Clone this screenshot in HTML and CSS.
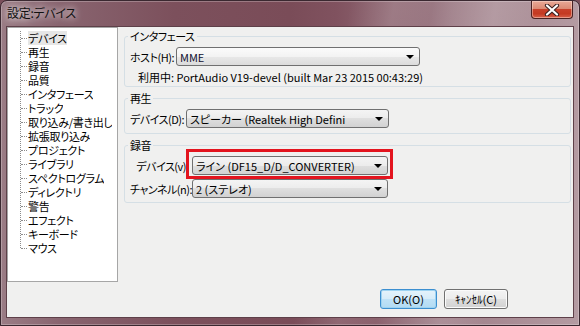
FILE: index.html
```html
<!DOCTYPE html>
<html lang="ja">
<head>
<meta charset="utf-8">
<title>設定:デバイス</title>
<link rel="stylesheet" href="styles.css">
</head>
<body>
<div class="window">
  <div class="titlebar">
    <span class="title">設定:デバイス</span>
    <div class="close">
      <svg width="16" height="12" viewBox="0 0 16 12">
        <path d="M3 1.5 L13 10.5 M13 1.5 L3 10.5" stroke="#3a2020" stroke-width="4.2" stroke-linecap="round"/>
        <path d="M3 1.5 L13 10.5 M13 1.5 L3 10.5" stroke="#ffffff" stroke-width="2.2" stroke-linecap="round"/>
      </svg>
    </div>
  </div>
  <div class="client">
    <div class="main">
      <div class="tree">
        <ul class="tree-list">
          <li class="sel"><span>デバイス</span></li>
          <li><span>再生</span></li>
          <li><span>録音</span></li>
          <li><span>品質</span></li>
          <li><span>インタフェース</span></li>
          <li><span>トラック</span></li>
          <li><span>取り込み/書き出し</span></li>
          <li><span>拡張取り込み</span></li>
          <li><span>プロジェクト</span></li>
          <li><span>ライブラリ</span></li>
          <li><span>スペクトログラム</span></li>
          <li><span>ディレクトリ</span></li>
          <li><span>警告</span></li>
          <li><span>エフェクト</span></li>
          <li><span>キーボード</span></li>
          <li><span>マウス</span></li>
        </ul>
      </div>
      <div class="panels">
        <div class="group g1">
          <div class="group-title">インタフェース</div>
          <div class="row r-host">
            <span class="lbl w-host">ホスト(H):</span>
            <div class="combo c-host"><span class="val">MME</span><span class="arrow"></span></div>
          </div>
          <div class="info">利用中: PortAudio V19-devel (built Mar 23 2015 00:43:29)</div>
        </div>
        <div class="group g2">
          <div class="group-title">再生</div>
          <div class="row r-play">
            <span class="lbl w-play">デバイス(D):</span>
            <div class="combo c-play"><span class="val">スピーカー (Realtek High Defini</span><span class="arrow"></span></div>
          </div>
        </div>
        <div class="group g3">
          <div class="group-title">録音</div>
          <div class="row r-rec1">
            <span class="lbl w-rec w-rec1">デバイス(v)</span>
            <div class="combo c-rec highlight"><span class="val">ライン (DF15_D/D_CONVERTER)</span><span class="arrow"></span></div>
          </div>
          <div class="row r-rec2">
            <span class="lbl w-rec">チャンネル(n):</span>
            <div class="combo c-rec"><span class="val">2 (ステレオ)</span><span class="arrow"></span></div>
          </div>
        </div>
      </div>
    </div>
    <div class="buttons">
      <div class="btn btn-ok">OK(O)</div>
      <div class="btn btn-cancel">ｷｬﾝｾﾙ(C)</div>
    </div>
  </div>
</div>
</body>
</html>
```

FILE: styles.css
```css
* { box-sizing: border-box; }
html, body { margin: 0; padding: 0; }
body {
  width: 580px;
  height: 326px;
  overflow: hidden;
  background: #7a4f5a;
  font-family: "Noto Sans CJK JP", "Noto Sans", sans-serif;
  font-size: 11px;
  line-height: 14px;
  color: #000;
  font-feature-settings: "palt";
}
.window {
  width: 580px;
  height: 326px;
  display: flex;
  flex-direction: column;
  border: 1px solid #3a2830;
  border-radius: 7px 7px 0 0;
  padding: 0 6px 8px 6px;
  background:
    linear-gradient(100deg, rgba(255,255,255,0) 0%, rgba(255,255,255,0) 55%, rgba(255,255,255,0.12) 62%, rgba(255,255,255,0) 68%, rgba(255,255,255,0.15) 78%, rgba(255,255,255,0) 85%),
    linear-gradient(90deg, #9a7c85 0%, #896570 10%, #7c505c 30%, #7a4c58 50%, #80525f 58%, #a0808a 78%, #b49ba2 100%);
  box-shadow: inset 0 0 0 1px rgba(255,255,255,0.25);
}
.titlebar {
  height: 26px;
  display: flex;
  align-items: flex-start;
  justify-content: space-between;
  flex: none;
}
.title {
  margin-top: 5px;
  font-size: 12px;
  line-height: 14px;
  color: #101010;
  letter-spacing: -0.3px;
  text-shadow: 0 0 6px rgba(255,255,255,0.9), 0 0 10px rgba(255,255,255,0.6);
}
.close {
  width: 42px;
  height: 18px;
  border: 1px solid #4a2222;
  border-top: none;
  border-radius: 0 0 4px 4px;
  background: linear-gradient(#e9a997 0%, #dc8a74 45%, #c8402a 50%, #c43a22 75%, #d8604a 100%);
  box-shadow: inset 0 0 0 1px rgba(255,230,220,0.45);
  display: flex;
  align-items: center;
  justify-content: center;
}
.close svg { display: block; }
.client {
  flex: 1;
  background: #f0f0ef;
  display: flex;
  flex-direction: column;
  outline: 1px solid #5e4049;
}
.main {
  height: 255px;
  display: flex;
  flex: none;
}
.tree {
  width: 111px;
  height: 255px;
  background: #fff;
  border: 1px solid #a6a6a6;
  padding: 3px 0 0 12px;
}
.tree-list {
  list-style: none;
  margin: 0;
  padding: 0;
  position: relative;
}
.tree-list::before {
  content: "";
  position: absolute;
  left: 0;
  top: 0;
  bottom: 7px;
  border-left: 1px dotted #8c8c8c;
}
.tree-list li {
  height: 14px;
  line-height: 14px;
  padding-left: 8px;
  position: relative;
  white-space: nowrap;
  letter-spacing: -0.3px;
}
.tree-list li span {
  display: inline-block;
  height: 14px;
  line-height: 14px;
  vertical-align: top;
  overflow: hidden;
}
.tree-list li::before {
  content: "";
  position: absolute;
  left: 1px;
  top: 7px;
  width: 6px;
  border-top: 1px dotted #8c8c8c;
}
.tree-list li.sel span {
  background: #e6e6e6;
}
.panels {
  width: 447px;
  margin-left: 6px;
  padding-top: 9px;
}
.group {
  border: 1px solid #d5dfe5;
  border-radius: 3px;
  padding: 0 5px 2px 5px;
}
.g2 { margin-top: 11px; padding-bottom: 5px; }
.g3 { margin-top: 11px; padding-bottom: 4px; }
.group-title {
  margin: -8px 0 0 -2px;
  width: fit-content;
  padding: 0 2px;
  height: 14px;
  line-height: 14px;
  background: #f0f0ef;
  letter-spacing: -0.4px;
}
.row {
  display: flex;
  align-items: center;
  margin-top: 4px;
}
.lbl {
  white-space: nowrap;
  flex: none;
  letter-spacing: -0.5px;
}
.w-host { width: 46px; }
.w-play { width: 56px; }
.w-rec { width: 62px; text-align: right; padding-right: 1px; }
.w-rec1 { padding-right: 6px; }
.combo {
  height: 19px;
  border: 1px solid #707070;
  border-radius: 3px;
  background: linear-gradient(#f4f4f4 0%, #ececec 50%, #dfdfdf 50%, #d2d2d2 100%);
  display: flex;
  align-items: center;
  justify-content: space-between;
  padding: 0 5px 0 3px;
  position: relative;
  white-space: nowrap;
}
.c-host { width: 244px; background: linear-gradient(#fbfbfb 0%, #f3f3f3 50%, #e8e8e8 50%, #dcdcdc 100%); }
.c-host .val { color: #101030; }
.c-play { width: 203px; }
.c-rec { width: 196px; }
.arrow {
  width: 0;
  height: 0;
  border-left: 4px solid transparent;
  border-right: 4px solid transparent;
  border-top: 4px solid #000;
  margin-top: 1px;
}
.highlight::after {
  content: "";
  position: absolute;
  left: -7px;
  right: -6px;
  top: -8px;
  bottom: -5px;
  border: 3px solid #e3141e;
}
.info {
  margin-top: 4px;
  padding-left: 8px;
  height: 14px;
  white-space: nowrap;
}
.buttons {
  display: flex;
  justify-content: flex-end;
  gap: 7px;
  padding: 7px 65px 0 0;
}
.btn {
  height: 20px;
  border-radius: 3px;
  display: flex;
  align-items: center;
  justify-content: center;
  white-space: nowrap;
}
.btn-ok {
  width: 57px;
  border: 1px solid #3c8fd0;
  background: linear-gradient(#e5f3fb 0%, #d6ecf9 50%, #bfe2f7 50%, #b3dbf3 100%);
  box-shadow: inset 0 0 0 1px #9ed3f1;
}
.btn-cancel {
  width: 64px;
  border: 1px solid #707070;
  background: linear-gradient(#f4f4f4 0%, #ececec 50%, #dfdfdf 50%, #d2d2d2 100%);
  box-shadow: inset 0 0 0 1px #fbfbfb;
}
```
